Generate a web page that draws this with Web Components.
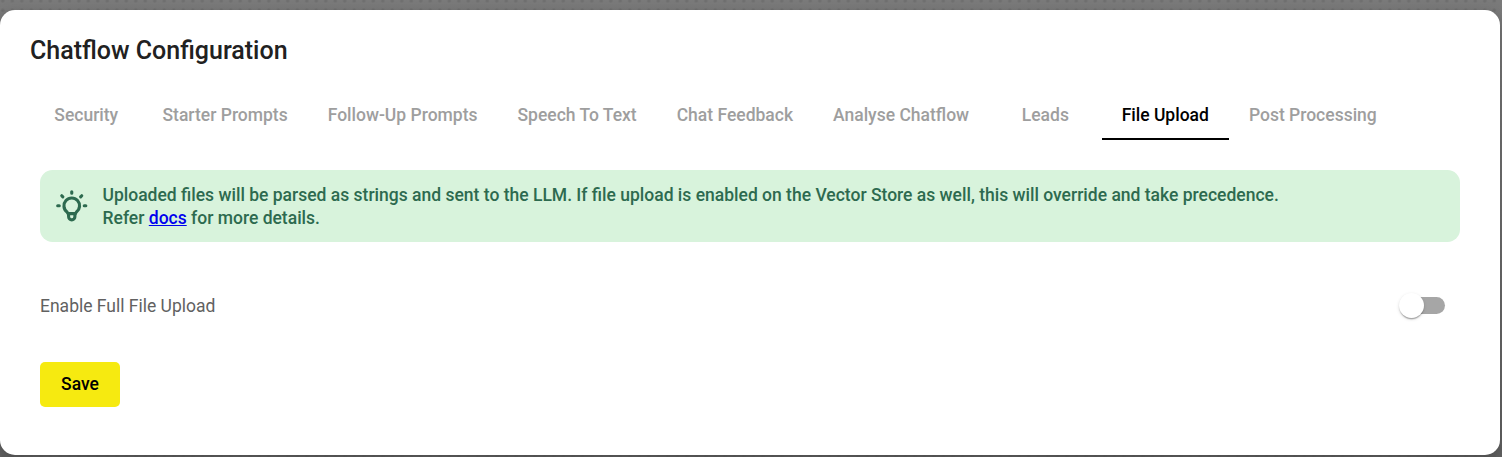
<!DOCTYPE html>
<html lang="en">
<head>
<meta charset="utf-8">
<title>Chatflow Configuration</title>
<style>
html, body { margin: 0; height: 100%; overflow: hidden; }
body { font-family: Roboto, sans-serif; }
</style>
</head>
<body>
<config-page></config-page>
<script>
const define = (name, html) => customElements.define(name, class extends HTMLElement {
  constructor() {
    super();
    this.attachShadow({ mode: 'open' }).innerHTML = html;
  }
});

define('config-dialog', `<style>
:host { display: block; box-sizing: border-box; width: 1500px; height: 445px; background: #fff; border-radius: 15px; box-shadow: 0 6px 14px 2px rgba(0,0,0,.2); }
h2 { margin: 0; padding: 21px 30px 0; height: 40px; line-height: 40px; font-size: 25px; font-weight: 500; color: #212121; box-sizing: content-box; }
</style><h2><slot name="title"></slot></h2><slot></slot>`);

define('tab-bar', `<style>
:host { display: flex; margin: 9px 30px 0; height: 60px; }
</style><slot></slot>`);

define('tab-item', `<style>
:host { display: flex; box-sizing: border-box; min-width: 112.5px; padding: 10px 20px 0; height: 60px; align-items: center; justify-content: center; font-size: 17.5px; font-weight: 500; line-height: 22px; color: #9e9e9e; white-space: nowrap; border-bottom: 2px solid transparent; border-top: 1px solid transparent; }
:host([selected]) { color: #000; border-bottom-color: #000; }
</style><slot></slot>`);

define('info-banner', `<style>
:host { display: flex; align-items: center; box-sizing: border-box; margin: 30px 40px 0; height: 72px; padding-left: 12.5px; gap: 12.5px; border-radius: 12.5px; background: #d8f3dc; color: #2d6a4f; font-size: 17.5px; font-weight: 500; line-height: 23px; }
svg { width: 37.5px; height: 37.5px; flex: none; margin-top: -1px; }
div { padding-top: 2px; }
</style>
<svg viewBox="0 0 24 24" fill="none" stroke="currentColor" stroke-width="2" stroke-linecap="round" stroke-linejoin="round"><path d="M3 12h1m8-9v1m8 8h1m-15.4-6.4l.7.7m12.1-.7l-.7.7"/><path d="M9 16a5 5 0 1 1 6 0a3.5 3.5 0 0 0-1 3a2 2 0 0 1-4 0a3.5 3.5 0 0 0-1-3"/><path d="M9.7 17h4.6"/></svg>
<div><slot></slot></div>`);

define('toggle-switch', `<style>
:host { display: flex; align-items: center; width: 42.5px; height: 17.5px; border-radius: 9px; background: #a6a6a6; }
i { width: 25px; height: 25px; flex: none; margin-left: -4px; border-radius: 50%; background: #fff; box-shadow: 0 2.5px 1.25px -1.25px rgba(0,0,0,.2), 0 1.25px 1.25px rgba(0,0,0,.14), 0 1.25px 3.75px rgba(0,0,0,.12); }
</style><i></i>`);

define('setting-row', `<style>
:host { display: flex; align-items: center; justify-content: space-between; margin: 40px 55px 0 40px; height: 47px; font-size: 17.5px; color: #616161; }
</style><slot></slot><toggle-switch></toggle-switch>`);

define('save-button', `<style>
:host { display: block; margin: 33px 40px 0; }
button { display: block; width: 80px; height: 45px; padding: 0; border: 0; border-radius: 5px; background: #f6ea10; color: #000; font: 500 17.5px/45px Roboto, sans-serif; }
</style><button><slot></slot></button>`);

define('config-page', `<style>
:host { display: block; box-sizing: border-box; height: 457px; padding-top: 10px; background: radial-gradient(circle, rgba(90,90,90,.35) 0 1px, transparent 2.3px) -2px -4px / 9.5px 9.5px, linear-gradient(#7a7a7a, #646464); }
a { color: #0000ee; }
</style>
<config-dialog>
  <span slot="title">Chatflow Configuration</span>
  <tab-bar>
    <tab-item>Security</tab-item><tab-item>Starter Prompts</tab-item><tab-item>Follow-Up Prompts</tab-item><tab-item>Speech To Text</tab-item><tab-item>Chat Feedback</tab-item><tab-item>Analyse Chatflow</tab-item><tab-item>Leads</tab-item><tab-item selected>File Upload</tab-item><tab-item>Post Processing</tab-item>
  </tab-bar>
  <info-banner>Uploaded files will be parsed as strings and sent to the LLM. If file upload is enabled on the Vector Store as well, this will override and take precedence.<br>Refer <a href="#">docs</a> for more details.</info-banner>
  <setting-row>Enable Full File Upload</setting-row>
  <save-button>Save</save-button>
</config-dialog>`);
</script>
</body>
</html>
